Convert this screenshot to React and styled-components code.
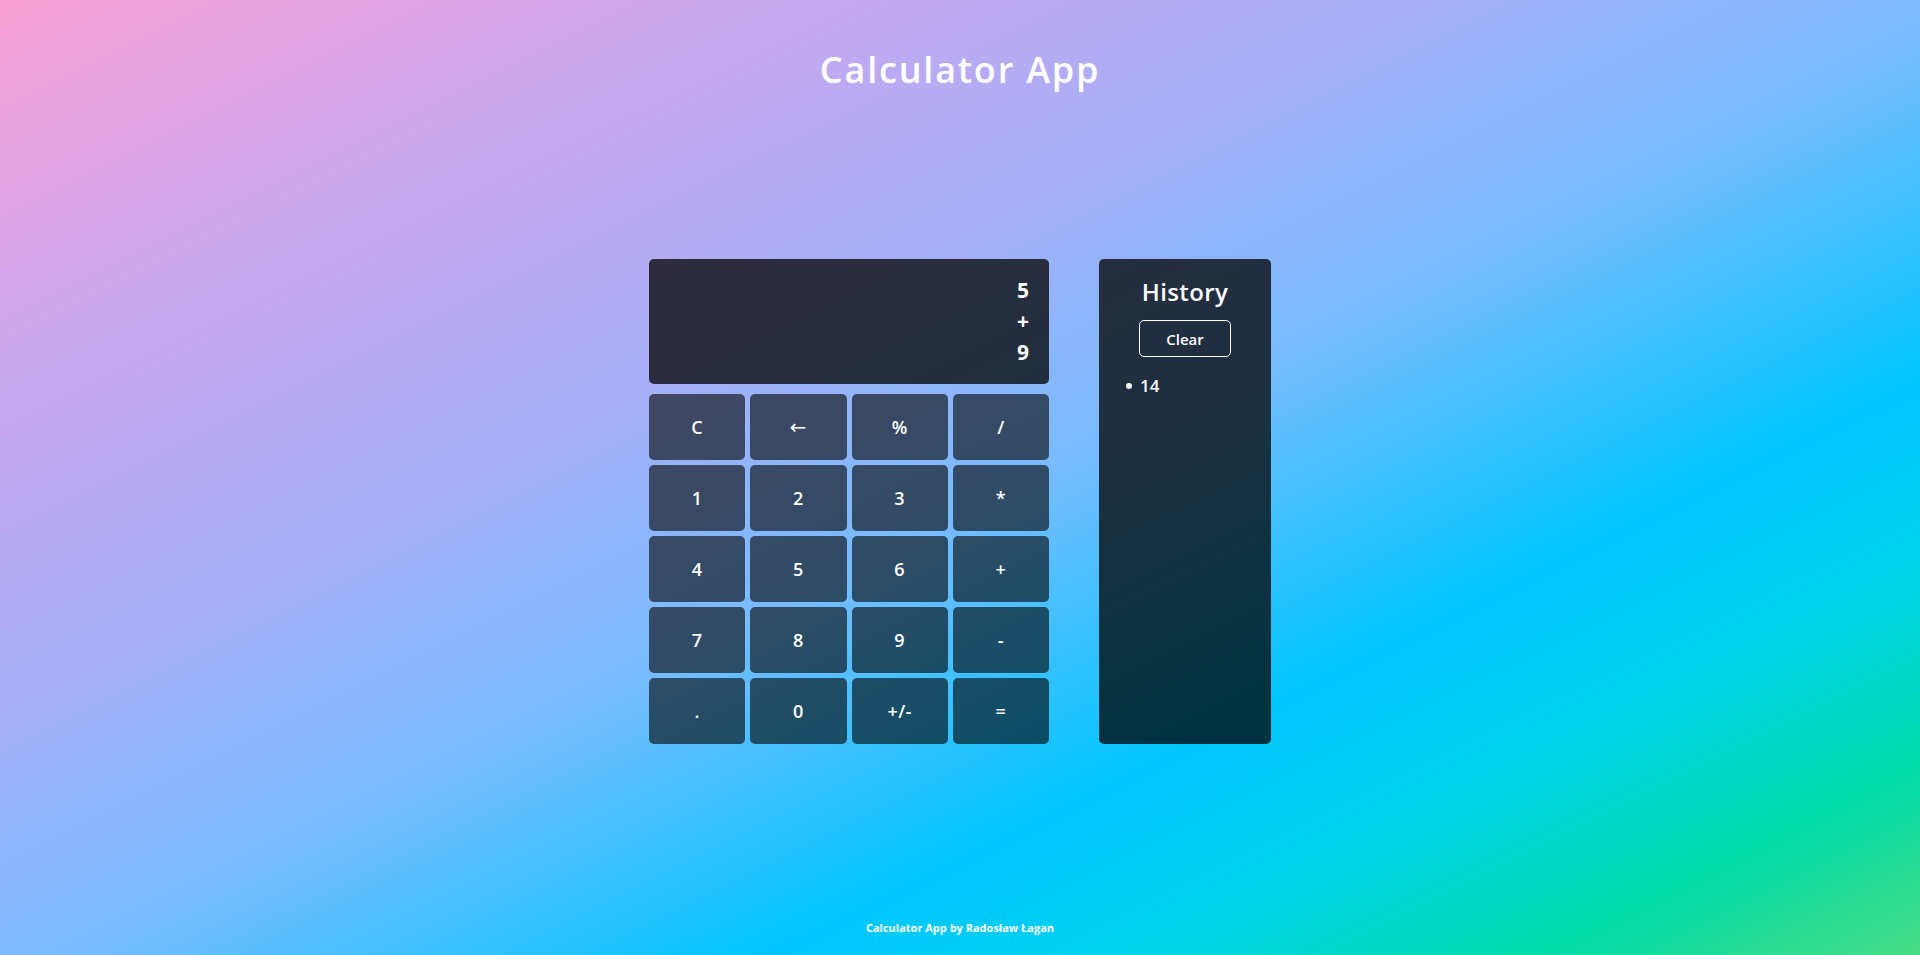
import React from "react";
import styled, { createGlobalStyle } from "styled-components";

const GlobalStyle = createGlobalStyle`
  html, body { margin: 0; padding: 0; min-height: 100%; }
  body {
    font-family: "Open Sans", "Liberation Sans", sans-serif;
    color: #fff;
    min-height: 100vh;
    background: linear-gradient(
      to bottom right,
      #f9a0d5 0%,
      #c9a8f0 20%,
      #a9aef6 36%,
      #78bcff 52%,
      #00c6ff 70%,
      #00d2ee 79%,
      #00dcaa 90%,
      #48dc84 100%
    );
  }
  #root { min-height: 100vh; }
`;

const Page = styled.div`
  min-height: 100vh;
  display: flex;
  flex-direction: column;
  align-items: center;
`;

const Title = styled.h1`
  margin: 48px 0 0;
  font-size: 36px;
  line-height: 44px;
  font-weight: 600;
  letter-spacing: 1.8px;
`;

const Main = styled.main`
  margin-top: 167px;
  display: flex;
  gap: 50px;
  align-items: stretch;
`;

const Calculator = styled.section`
  width: 400px;
  display: flex;
  flex-direction: column;
  gap: 10px;
`;

const Display = styled.div`
  height: 125px;
  box-sizing: border-box;
  padding: 16px 20px;
  border-radius: 5px;
  background: rgba(0, 0, 0, 0.75);
  display: flex;
  flex-direction: column;
  justify-content: center;
  align-items: flex-end;
`;

const DisplayLine = styled.div`
  font-size: 21px;
  line-height: 31px;
  font-weight: 700;
`;

const Keypad = styled.div`
  display: grid;
  grid-template-columns: repeat(4, 1fr);
  grid-auto-rows: 66px;
  gap: 5px;
`;

const Key = styled.button`
  border: none;
  border-radius: 5px;
  background: rgba(0, 0, 0, 0.6);
  color: #fff;
  font-family: ${(p) => (p.$symbol ? `"DejaVu Sans", sans-serif` : `"Open Sans", "Liberation Sans", sans-serif`)};
  font-size: ${(p) => (p.$symbol ? "20px" : "18px")};
  font-weight: ${(p) => (p.$symbol ? 400 : 600)};
  letter-spacing: 0.4px;
  cursor: pointer;
  padding: 0;
`;

const History = styled.aside`
  width: 172px;
  box-sizing: border-box;
  padding: 18px 0 0;
  border-radius: 5px;
  background: rgba(0, 0, 0, 0.75);
  display: flex;
  flex-direction: column;
  align-items: center;
`;

const HistoryTitle = styled.h2`
  margin: 0;
  font-size: 24px;
  line-height: 30px;
  font-weight: 600;
  letter-spacing: 0.4px;
`;

const ClearButton = styled.button`
  margin-top: 13px;
  width: 92px;
  height: 37px;
  border: 1px solid #fff;
  border-radius: 5px;
  background: transparent;
  color: #fff;
  font-family: "Open Sans", "Liberation Sans", sans-serif;
  font-size: 15px;
  font-weight: 600;
  cursor: pointer;
`;

const HistoryList = styled.ul`
  align-self: stretch;
  list-style: none;
  margin: 17px 0 0;
  padding: 0 0 0 27px;
`;

const HistoryItem = styled.li`
  display: flex;
  align-items: center;
  gap: 8px;
  font-size: 17px;
  line-height: 24px;
  font-weight: 600;
  &::before {
    content: "";
    width: 6px;
    height: 6px;
    border-radius: 50%;
    background: #fff;
  }
`;

const Footer = styled.footer`
  margin-top: auto;
  padding-bottom: 20px;
  font-size: 11px;
  line-height: 14px;
  font-weight: 700;
`;

const keys = ["C", "←", "%", "/", "1", "2", "3", "*", "4", "5", "6", "+", "7", "8", "9", "-", ".", "0", "+/-", "="];

export default function App() {
  return (
    <>
      <GlobalStyle />
      <Page>
        <Title>Calculator App</Title>
        <Main>
          <Calculator>
            <Display>
              <DisplayLine>5</DisplayLine>
              <DisplayLine>+</DisplayLine>
              <DisplayLine>9</DisplayLine>
            </Display>
            <Keypad>
              {keys.map((k) => (
                <Key key={k} $symbol={k === "←"}>
                  {k}
                </Key>
              ))}
            </Keypad>
          </Calculator>
          <History>
            <HistoryTitle>History</HistoryTitle>
            <ClearButton>Clear</ClearButton>
            <HistoryList>
              <HistoryItem>14</HistoryItem>
            </HistoryList>
          </History>
        </Main>
        <Footer>Calculator App by Radosław Łagan</Footer>
      </Page>
    </>
  );
}
